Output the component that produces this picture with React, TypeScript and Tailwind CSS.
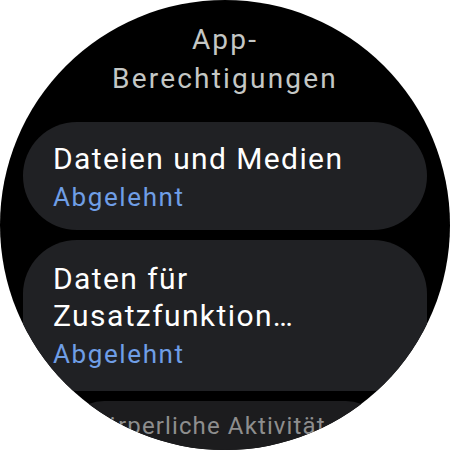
export default function App() {
  return (
    <div className="w-[450px] h-[450px] bg-white" style={{ fontFamily: "Roboto, 'Noto Sans', sans-serif" }}>
      <div className="w-full h-full rounded-full bg-black overflow-hidden flex flex-col items-center">
        {/* Title */}
        <h1 className="mt-[20px] text-center text-[28px] leading-[39px] text-[#c4c7c5] tracking-[2.2px]">
          App-
          <br />
          Berechtigungen
        </h1>

        <div className="mt-[24px] w-[404px] flex flex-col gap-[10px]">
          {/* Chip 1 */}
          <div className="rounded-[54px] bg-[#202124] px-[30px] pt-[18px] pb-[13px]">
            <div className="text-[30px] leading-[37px] text-white tracking-[1.4px]">Dateien und Medien</div>
            <div className="text-[26px] leading-[40px] text-[#6f9ee6] tracking-[1.6px]">Abgelehnt</div>
          </div>

          {/* Chip 2 */}
          <div className="rounded-[54px] bg-[#202124] px-[30px] pt-[20px] pb-[17px]">
            <div className="text-[30px] leading-[37px] text-white tracking-[1.4px]">
              Daten für
              <br />
              Zusatzfunktion…
            </div>
            <div className="text-[26px] leading-[40px] text-[#6f9ee6] tracking-[1.6px]">Abgelehnt</div>
          </div>

          {/* Chip 3, shrunk and dimmed near the bottom edge */}
          <div className="rounded-[54px] bg-[#1c1c1e] px-[30px] pt-[12px] pb-[13px] scale-[0.8] origin-top">
            <div className="text-[30px] leading-[37px] text-[#8e8e8e] tracking-[1.4px]">Körperliche Aktivität</div>
            <div className="text-[26px] leading-[40px] text-[#3f5a80] tracking-[1.6px]">Abgelehnt</div>
          </div>
        </div>
      </div>
    </div>
  );
}
